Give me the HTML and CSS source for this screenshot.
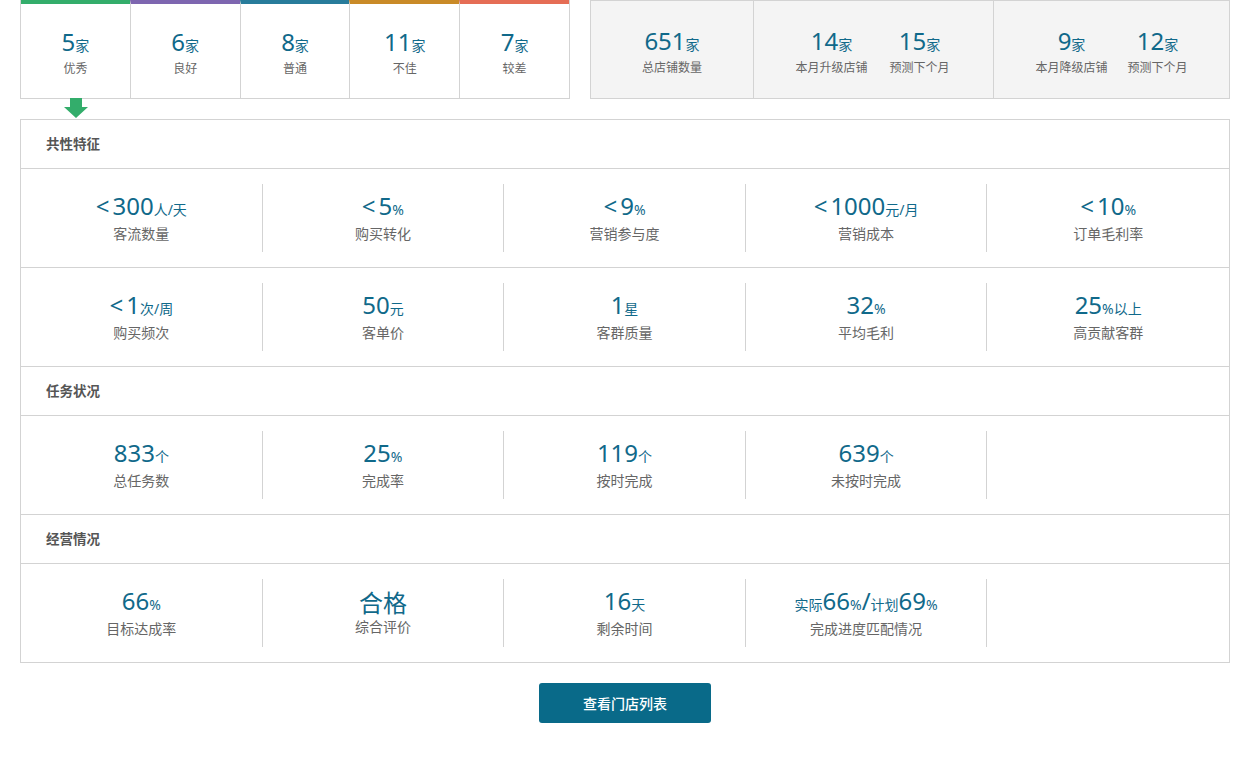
FILE: index.html
```html
<!DOCTYPE html>
<html lang="zh-CN">
<head>
<meta charset="utf-8">
<link rel="stylesheet" href="styles.css">
</head>
<body>
<div class="page">
  <div class="summary">
    <div class="grades">
      <div class="grade g1"><div class="num">5<span class="unit">家</span></div><div class="lbl">优秀</div>
        <svg class="arrow" width="24" height="20" viewBox="0 0 24 20"><path d="M6 0h12v9h6L12 20 0 9h6z" fill="#33ad6b"/></svg>
      </div>
      <div class="grade g2"><div class="num">6<span class="unit">家</span></div><div class="lbl">良好</div></div>
      <div class="grade g3"><div class="num">8<span class="unit">家</span></div><div class="lbl">普通</div></div>
      <div class="grade g4"><div class="num">11<span class="unit">家</span></div><div class="lbl">不佳</div></div>
      <div class="grade g5"><div class="num">7<span class="unit">家</span></div><div class="lbl">较差</div></div>
    </div>
    <div class="totals">
      <div class="tcell c1">
        <div class="item"><div class="num">651<span class="unit">家</span></div><div class="lbl">总店铺数量</div></div>
      </div>
      <div class="tcell c2">
        <div class="item"><div class="num">14<span class="unit">家</span></div><div class="lbl">本月升级店铺</div></div>
        <div class="item"><div class="num">15<span class="unit">家</span></div><div class="lbl">预测下个月</div></div>
      </div>
      <div class="tcell c3">
        <div class="item"><div class="num">9<span class="unit">家</span></div><div class="lbl">本月降级店铺</div></div>
        <div class="item"><div class="num">12<span class="unit">家</span></div><div class="lbl">预测下个月</div></div>
      </div>
    </div>
  </div>

  <div class="panel">
    <div class="section-title">共性特征</div>
    <div class="row">
      <div class="cell"><div class="num"><span class="lt">&lt;</span>300<span class="unit">人/天</span></div><div class="lbl">客流数量</div></div>
      <div class="cell"><div class="num"><span class="lt">&lt;</span>5<span class="unit">%</span></div><div class="lbl">购买转化</div></div>
      <div class="cell"><div class="num"><span class="lt">&lt;</span>9<span class="unit">%</span></div><div class="lbl">营销参与度</div></div>
      <div class="cell"><div class="num"><span class="lt">&lt;</span>1000<span class="unit">元/月</span></div><div class="lbl">营销成本</div></div>
      <div class="cell"><div class="num"><span class="lt">&lt;</span>10<span class="unit">%</span></div><div class="lbl">订单毛利率</div></div>
    </div>
    <div class="row">
      <div class="cell"><div class="num"><span class="lt">&lt;</span>1<span class="unit">次/周</span></div><div class="lbl">购买频次</div></div>
      <div class="cell"><div class="num">50<span class="unit">元</span></div><div class="lbl">客单价</div></div>
      <div class="cell"><div class="num">1<span class="unit">星</span></div><div class="lbl">客群质量</div></div>
      <div class="cell"><div class="num">32<span class="unit">%</span></div><div class="lbl">平均毛利</div></div>
      <div class="cell"><div class="num">25<span class="unit">%以上</span></div><div class="lbl">高贡献客群</div></div>
    </div>
    <div class="section-title">任务状况</div>
    <div class="row">
      <div class="cell"><div class="num">833<span class="unit">个</span></div><div class="lbl">总任务数</div></div>
      <div class="cell"><div class="num">25<span class="unit">%</span></div><div class="lbl">完成率</div></div>
      <div class="cell"><div class="num">119<span class="unit">个</span></div><div class="lbl">按时完成</div></div>
      <div class="cell"><div class="num">639<span class="unit">个</span></div><div class="lbl">未按时完成</div></div>
    </div>
    <div class="section-title">经营情况</div>
    <div class="row last">
      <div class="cell"><div class="num">66<span class="unit">%</span></div><div class="lbl">目标达成率</div></div>
      <div class="cell"><div class="num">合格</div><div class="lbl">综合评价</div></div>
      <div class="cell"><div class="num">16<span class="unit">天</span></div><div class="lbl">剩余时间</div></div>
      <div class="cell"><div class="num"><span class="unit">实际</span>66<span class="unit">%</span>/<span class="unit">计划</span>69<span class="unit">%</span></div><div class="lbl">完成进度匹配情况</div></div>
    </div>
  </div>

  <div class="actions">
    <button class="btn">查看门店列表</button>
  </div>
</div>
</body>
</html>
```

FILE: styles.css
```css
* { box-sizing: border-box; }
html, body { margin: 0; padding: 0; background: #fff; }
body {
  font-family: "Noto Sans", "Noto Sans CJK SC", sans-serif;
  color: #666;
}
.page { padding: 0 20px; }

.summary { display: flex; gap: 20px; height: 99px; }

.grades {
  width: 550px;
  display: flex;
  border-left: 1px solid #d3d3d3;
  border-right: 1px solid #d3d3d3;
  border-bottom: 1px solid #d3d3d3;
}
.grade {
  position: relative;
  flex: 1;
  display: flex;
  flex-direction: column;
  align-items: center;
  justify-content: center;
  border-top: 4px solid #33ad6b;
  padding-top: 2px;
}
.grade + .grade { border-left: 1px solid #d3d3d3; }
.g1 { border-top-color: #33ad6b; }
.g2 { border-top-color: #7e66b0; }
.g3 { border-top-color: #287c9b; }
.g4 { border-top-color: #c98a27; }
.g5 { border-top-color: #e56d55; }
.arrow { position: absolute; left: 43px; top: 94px; }

.totals {
  flex: 1;
  display: flex;
  background: #f4f4f4;
  border: 1px solid #d3d3d3;
}
.tcell {
  display: flex;
  justify-content: center;
  align-items: center;
  gap: 22px;
  padding-top: 4px;
}
.tcell + .tcell { border-left: 1px solid #d3d3d3; }
.c1 { width: 162px; }
.c2 { width: 240px; padding-right: 2px; }
.c3 { flex: 1; padding-left: 0; gap: 20px; }
.item { display: flex; flex-direction: column; align-items: center; }

.num {
  color: #10698a;
  font-size: 24px;
  line-height: 28px;
  white-space: nowrap;
}
.lt { margin-right: 3px; }
.unit { font-size: 14px; }
.lbl {
  font-size: 14px;
  line-height: 18px;
  color: #666;
  margin-top: 1px;
}
.grade .lbl, .tcell .lbl { font-size: 12px; line-height: 16px; margin-top: 1px; }

.panel {
  margin-top: 20px;
  border: 1px solid #d3d3d3;
}
.section-title {
  height: 49px;
  line-height: 48px;
  padding-left: 25px;
  font-size: 13.5px;
  font-weight: bold;
  color: #555;
  border-bottom: 1px solid #d3d3d3;
}
.row {
  display: grid;
  grid-template-columns: repeat(5, 1fr);
  height: 99px;
  padding: 15px 0 15px;
  border-bottom: 1px solid #d3d3d3;
}
.row.last { border-bottom: none; height: 98px; }
.cell {
  display: flex;
  flex-direction: column;
  align-items: center;
  justify-content: center;
  padding-bottom: 2px;
}
.cell:not(:nth-child(5n)) { border-right: 1px solid #d3d3d3; }

.actions { display: flex; justify-content: center; padding-top: 20px; }
.btn {
  width: 172px;
  height: 40px;
  border: none;
  border-radius: 3px;
  background: #096a89;
  color: #fff;
  font-family: "Noto Sans CJK SC", sans-serif;
  font-size: 14px;
  font-weight: 500;
}
```
